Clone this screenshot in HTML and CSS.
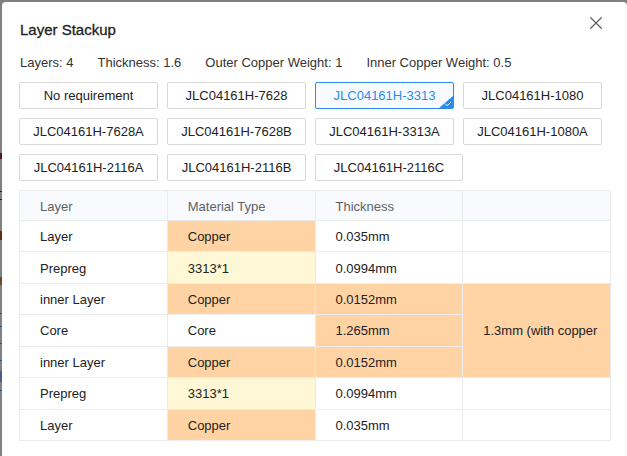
FILE: index.html
```html
<!DOCTYPE html>
<html lang="en">
<head>
<meta charset="utf-8">
<title>Layer Stackup</title>
<link rel="stylesheet" href="styles.css">
</head>
<body>
<main class="dialog" role="dialog" aria-labelledby="dialog-title">
  <header class="dialog-header">
    <h1 class="title" id="dialog-title">Layer Stackup</h1>
    <button class="close" type="button" aria-label="Close">
      <svg width="12" height="12" viewBox="0 0 12 12" fill="none" stroke="currentColor" stroke-width="1.3"><path d="M0.3 0.3 11.7 11.7M11.7 0.3 0.3 11.7"/></svg>
    </button>
  </header>
  <div class="specs">
    <span>Layers: 4</span>
    <span>Thickness: 1.6</span>
    <span>Outer Copper Weight: 1</span>
    <span>Inner Copper Weight: 0.5</span>
  </div>
  <div class="options">
    <button class="option" type="button">No requirement</button>
    <button class="option" type="button">JLC04161H-7628</button>
    <button class="option selected" type="button" aria-pressed="true">JLC04161H-3313
      <svg class="tick" width="14" height="12" viewBox="0 0 14 12"><path d="M14 0V12H0Z" fill="#2b8cee"/><path d="M6 7.5 8.2 9.7 12 6" fill="none" stroke="#fff" stroke-width="1"/></svg>
    </button>
    <button class="option" type="button">JLC04161H-1080</button>
    <button class="option" type="button">JLC04161H-7628A</button>
    <button class="option" type="button">JLC04161H-7628B</button>
    <button class="option" type="button">JLC04161H-3313A</button>
    <button class="option" type="button">JLC04161H-1080A</button>
    <button class="option" type="button">JLC04161H-2116A</button>
    <button class="option" type="button">JLC04161H-2116B</button>
    <button class="option wide" type="button">JLC04161H-2116C</button>
  </div>
  <table class="stackup">
    <thead>
      <tr><th scope="col">Layer</th><th scope="col">Material Type</th><th scope="col">Thickness</th><th></th></tr>
    </thead>
    <tbody>
      <tr><td>Layer</td><td class="copper">Copper</td><td>0.035mm</td><td></td></tr>
      <tr><td>Prepreg</td><td class="prepreg">3313*1</td><td>0.0994mm</td><td></td></tr>
      <tr><td>inner Layer</td><td class="copper">Copper</td><td class="copper">0.0152mm</td><td class="copper" rowspan="3">1.3mm (with copper</td></tr>
      <tr><td>Core</td><td>Core</td><td class="copper">1.265mm</td></tr>
      <tr><td>inner Layer</td><td class="copper">Copper</td><td class="copper">0.0152mm</td></tr>
      <tr><td>Prepreg</td><td class="prepreg">3313*1</td><td>0.0994mm</td><td></td></tr>
      <tr><td>Layer</td><td class="copper">Copper</td><td>0.035mm</td><td></td></tr>
    </tbody>
  </table>
</main>
</body>
</html>
```
FILE: styles.css
```css
* {
  box-sizing: border-box;
}

body {
  margin: 0;
  padding: 2px 0 0 2px;
  min-height: 100vh;
  display: flex;
  /* edge of the dimmed page behind the dialog */
  background:
    linear-gradient(#501828, #501828) 0 153px / 2px 6px no-repeat,
    linear-gradient(#222, #222) 0 191px / 2px 1px no-repeat,
    linear-gradient(#222, #222) 0 199px / 2px 1px no-repeat,
    linear-gradient(#5a3010, #5a3010) 0 231px / 2px 9px no-repeat,
    linear-gradient(#6b4a2a, #6b4a2a) 0 277px / 2px 8px no-repeat,
    linear-gradient(#1f5590, #1f5590) 0 313px / 2px 1px no-repeat,
    linear-gradient(#1f5590, #1f5590) 0 326px / 2px 1px no-repeat,
    linear-gradient(#1f5590, #1f5590) 0 343px / 2px 1px no-repeat,
    linear-gradient(#1f5590, #1f5590) 0 360px / 2px 1px no-repeat,
    linear-gradient(#4a5f90, #4a5f90) 0 371px / 2px 11px no-repeat,
    linear-gradient(#1f5590, #1f5590) 0 390px / 2px 1px no-repeat,
    #808080;
  color: #222;
  font: 13px/16px "Liberation Sans", Arial, sans-serif;
}

.dialog {
  flex: 1;
  min-width: 0;
  padding: 14px 16px 14px 17px;
  background: #fff;
  border-radius: 4px 4px 0 0;
}

.dialog-header {
  display: flex;
  justify-content: space-between;
  align-items: flex-start;
}

.title {
  margin: 0;
  padding-left: 1px;
  font: 400 15px/28px "Liberation Sans", Arial, sans-serif;
  -webkit-text-stroke: 0.3px currentColor;
}

.close {
  display: flex;
  padding: 1px 9px;
  border: 0;
  background: none;
  color: #606266;
}

.specs {
  display: flex;
  gap: 24px;
  margin: 11px 0;
  padding-left: 1px;
  color: #333;
}

.options {
  display: grid;
  grid-template-columns: repeat(4, 1fr);
  row-gap: 9px;
}

.option {
  position: relative;
  height: 27px;
  margin-right: 9px;
  padding: 0;
  border: 1px solid #d9d9d9;
  border-radius: 2px;
  background: #fff;
  color: #222;
  font: inherit;
}

.option.wide {
  margin-right: 0;
}

.option.selected {
  border-color: #2b8cee;
  background: #f7faff;
  color: #2b8cee;
}

.tick {
  position: absolute;
  right: 0;
  bottom: 0;
}

.stackup {
  width: 100%;
  height: 251px;
  margin-top: 9px;
  border-collapse: collapse;
  table-layout: fixed;
}

.stackup th,
.stackup td {
  padding: 2px 20px 0;
  border: 1px solid #ebebeb;
  text-align: left;
  white-space: nowrap;
}

.stackup th {
  height: 30px;
  background: #f8fafd;
  color: #606266;
  font-weight: 400;
}

.stackup .copper {
  background: #ffd3a4;
}

.stackup .prepreg {
  background: #fff8d6;
}
```
